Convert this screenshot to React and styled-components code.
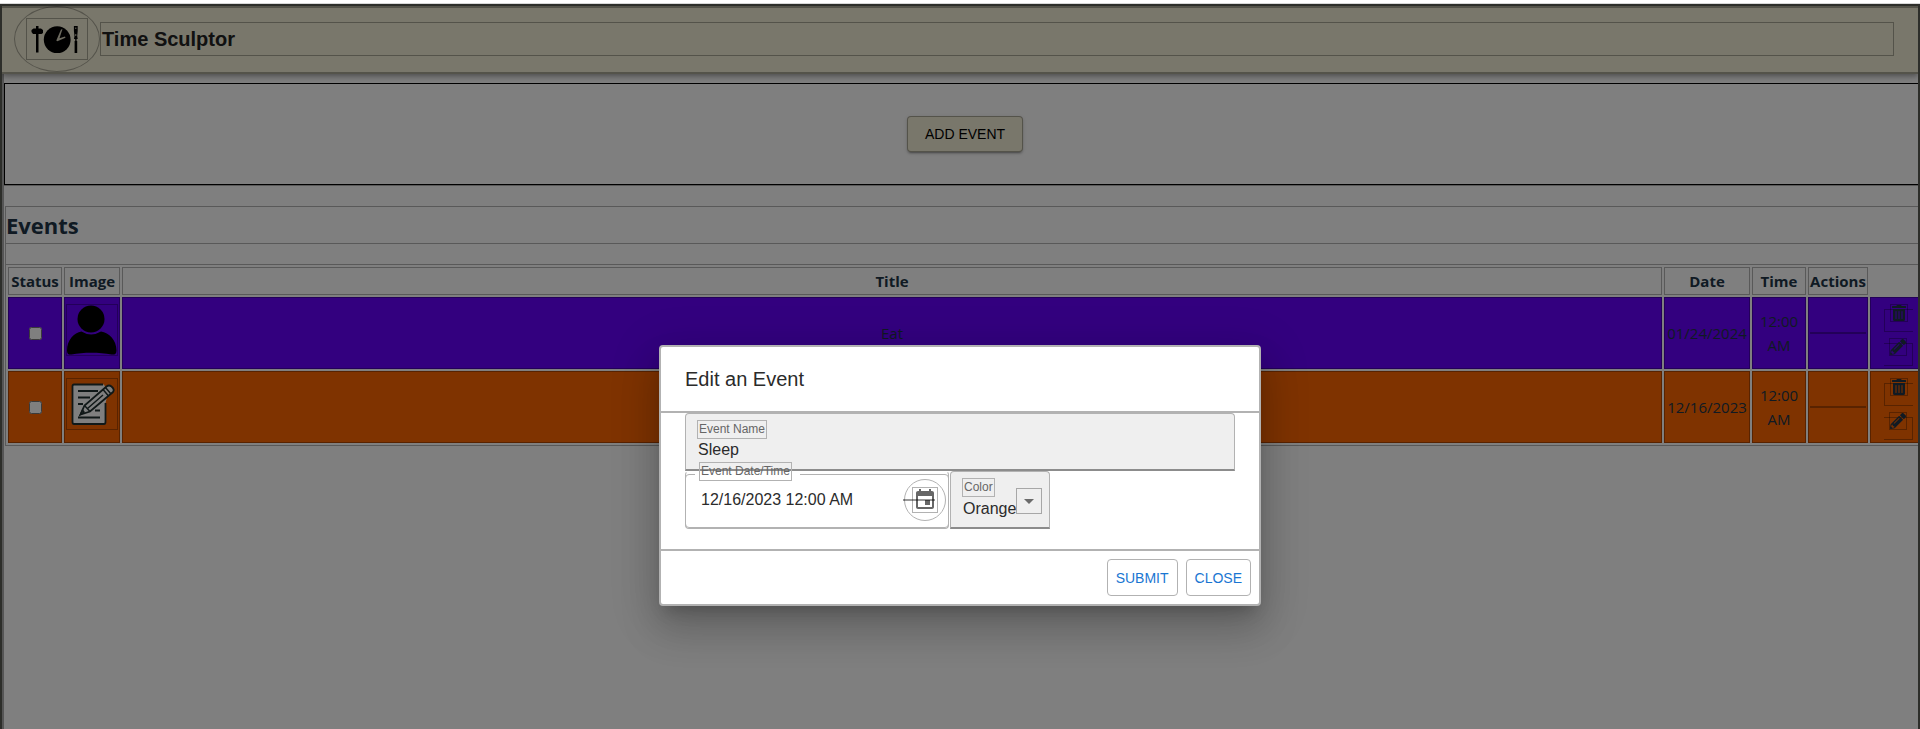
import React from 'react';
import styled, { createGlobalStyle } from 'styled-components';
import { FaPencilAlt, FaTrashAlt } from 'react-icons/fa';

const line = 'rgba(0, 0, 0, 0.3)';
const ui = "'Liberation Sans', Arial, sans-serif";
const body = "'Open Sans', 'Noto Sans', sans-serif";

const GlobalStyle = createGlobalStyle`
  *, *::before, *::after { box-sizing: border-box; }
  body { margin: 0; background: #fff; overflow: hidden; font-family: ${body}; color: #213547; }
  button, input, select { font: inherit; color: inherit; margin: 0; }
`;

const Page = styled.div`
  border-top: 1px solid #d8d8d8;
  margin-top: 3px;
  height: calc(100vh - 3px);
  position: relative;
`;

const Frame = styled.div`
  height: 100%;
  overflow: hidden;
  border: 2px solid #5a5c54;
  border-bottom: 0;
`;

const Header = styled.header`
  position: relative;
  display: flex;
  align-items: center;
  height: 68px;
  padding: 0 24px 2px 12px;
  background: #f2eed6;
  border: 2px solid ${line};
  border-width: 2px 0;
  box-shadow: 0 2px 4px -1px rgba(0, 0, 0, 0.2), 0 4px 5px rgba(0, 0, 0, 0.14), 0 1px 10px rgba(0, 0, 0, 0.12);
`;

const LogoButton = styled.button`
  flex: none;
  width: 86px;
  height: 66px;
  padding: 11px;
  background: none;
  border: 1px solid ${line};
  border-radius: 50%;
  color: #000;
  svg { display: block; width: 62px; height: 42px; border: 1px solid ${line}; }
`;

const AppTitle = styled.h1`
  flex: 1;
  margin: 0;
  padding-left: 1px;
  border: 1px solid ${line};
  font: 700 20px/32px ${ui};
  color: #222;
`;

const Main = styled.main`
  margin-right: -8px;
  padding-top: 9px;
  height: 100%;
  border-left: 2px solid #aaa;
`;

const Toolbar = styled.div`
  display: flex;
  align-items: center;
  justify-content: center;
  height: 102px;
  border: 1px solid #000;
  box-shadow: 0 1px 0 ${line};
`;

const AddButton = styled.button`
  height: 36px;
  padding: 0 17px;
  background: #f2eed6;
  border: 1px solid ${line};
  border-radius: 4px;
  box-shadow: 0 3px 1px -2px rgba(0, 0, 0, 0.2), 0 2px 2px rgba(0, 0, 0, 0.14), 0 1px 5px rgba(0, 0, 0, 0.12);
  font: 400 14px/24px ${ui};
  text-transform: uppercase;
  color: #000;
`;

const EventList = styled.section`
  margin: 21px -3px 0 1px;
  border-left: 1px solid ${line};
`;

const SectionTitle = styled.h2`
  margin: 0 0 20px;
  border: 1px solid ${line};
  border-left: 0;
  font-size: 22px;
  line-height: 36px;
  font-weight: 700;
`;

const Table = styled.table`
  width: 100%;
  table-layout: fixed;
  border: 1px solid ${line};
  border-left: 0;
  border-spacing: 2px;
  font-size: 15px;
  line-height: 24px;
  text-align: center;
`;

const Col = styled.col`
  width: ${(p) => p.$w};
`;

const Th = styled.th`
  height: 28px;
  padding: 0;
  border: 1px solid ${line};
  font-weight: 700;
`;

const Td = styled.td`
  height: 72px;
  padding: 0 1px;
  border: 1px solid ${line};
  background: ${(p) => p.$color};
`;

const Check = styled.input`
  display: block;
  width: 13px;
  height: 13px;
  margin: 0 auto;
`;

const Picture = styled.svg`
  display: block;
  width: 52px;
  height: 52px;
  margin: 0 auto 6px;
  border: 1px solid ${line};
`;

const Rule = styled.hr`
  margin: 0;
  border: 0;
  border-top: 2px solid ${line};
`;

const Actions = styled.div`
  display: flex;
  flex-direction: column;
  align-items: center;
  gap: 11px;
  padding-top: 9px;
`;

const IconButton = styled.button`
  display: flex;
  justify-content: center;
  width: 29px;
  height: 23px;
  padding: 0;
  background: none;
  border: 1px solid ${line};
  border-${(p) => p.$open}-width: 0;
  svg { flex: none; width: 18px; height: 18px; margin-top: -6px; border: 1px solid ${line}; }
`;

const Backdrop = styled.div`
  position: absolute;
  inset: 0;
  display: flex;
  align-items: flex-start;
  justify-content: center;
  padding-top: 341px;
  background: rgba(0, 0, 0, 0.5);
`;

const Dialog = styled.form`
  width: 602px;
  background: #fff;
  border: 2px solid #b2b2b2;
  border-radius: 4px;
  box-shadow: 0 11px 15px -7px rgba(0, 0, 0, 0.2), 0 24px 38px 3px rgba(0, 0, 0, 0.14), 0 9px 46px 8px rgba(0, 0, 0, 0.12);
  font-family: ${ui};
  color: #2b2b2b;
`;

const DialogTitle = styled.h2`
  margin: 0;
  padding: 16px 24px;
  font-size: 20px;
  line-height: 32px;
  font-weight: 400;
`;

const DialogContent = styled.div`
  padding: 0 24px 20px;
  border-top: 2px solid #b2b2b2;
  border-bottom: 2px solid #b2b2b2;
`;

const FieldRow = styled.div`
  display: flex;
  gap: 1px;
`;

const Filled = styled.div`
  position: relative;
  width: ${(p) => p.$w};
  height: 58px;
  padding: 6px 11px 0;
  background: #efefef;
  border: 1px solid #b2b2b2;
  border-bottom: 2px solid #8c8c8c;
  border-radius: 4px 4px 0 0;
`;

const Label = styled.label`
  display: block;
  width: max-content;
  padding: 0 1px;
  border: 1px solid #b2b2b2;
  font-size: 12px;
  line-height: 17px;
  color: #666;
`;

const Input = styled.input`
  display: block;
  width: 100%;
  height: 22px;
  padding: 0 0 0 1px;
  background: none;
  border: 0;
  outline: 0;
  font-size: 16px;
`;

const Select = styled.select`
  appearance: none;
  display: block;
  width: 100%;
  height: 22px;
  padding: 0 0 0 1px;
  background: none;
  border: 0;
  outline: 0;
  font-size: 16px;
`;

const Arrow = styled.svg`
  position: absolute;
  top: 16px;
  right: 7px;
  width: 26px;
  height: 26px;
  border: 1px solid #a7a7a7;
  fill: #6b6b6b;
  pointer-events: none;
`;

const Outlined = styled.div`
  position: relative;
  display: flex;
  align-items: center;
  width: 264px;
  height: 58px;
  padding: 0 2px 0 14px;
  border: 1px solid #b2b2b2;
  border-top-color: transparent;
  border-radius: 4px;
`;

const Notch = styled.fieldset`
  position: absolute;
  inset: -6px -1px 0 -1px;
  margin: 0;
  padding: 0 9px;
  border: 1px solid #b2b2b2;
  border-radius: 4px;
  pointer-events: none;
  legend { width: 105px; height: 16px; padding: 0; }
`;

const FloatingLabel = styled(Label)`
  position: absolute;
  top: -10px;
  left: 13px;
`;

const PickerButton = styled.button`
  position: relative;
  flex: none;
  width: 42px;
  height: 42px;
  padding: 7px;
  background: none;
  border: 1px solid #b2b2b2;
  border-radius: 50%;
  svg { display: block; width: 26px; height: 26px; border: 1px solid #b2b2b2; fill: #666; }
  &::after {
    content: '';
    position: absolute;
    top: 19px;
    left: -2px;
    width: 32px;
    height: 2px;
    background: rgba(0, 0, 0, 0.4);
  }
`;

const DialogActions = styled.div`
  display: flex;
  justify-content: flex-end;
  gap: 8px;
  padding: 8px;
`;

const TextButton = styled.button`
  height: 37px;
  padding: 0 8px;
  background: none;
  border: 1px solid #b2b2b2;
  border-radius: 4px;
  font-size: 14px;
  line-height: 24px;
  text-transform: uppercase;
  color: #1976d2;
`;

const Logo = () => (
  <svg viewBox="0 0 60 40" aria-hidden="true">
    <path d="M9 7H11.500V9.500H14L16 11V14L14.500 15H11.500V33.500H9V15H6L4.500 13V11L6.500 9.500H9z" />
    <circle cx="30.200" cy="20.700" r="13.400" />
    <path d="M30.300 22.300 29.300 21.500 34 10.500 35.500 10.300 34.500 13 32.500 19.300 38 17.500 38.500 18.800z" fill="#d8d4bf" />
    <path d="M46.900 7H50.700V12L50.200 17 50.700 20H49.600V22H50.200V34H47.600V22H48.200V20H47L47.500 17 46.900 12z" />
    <path d="M48.800 8.500V10M48.800 15V17" stroke="#d8d4bf" />
  </svg>
);

const Person = () => (
  <Picture viewBox="0 0 50 50" role="img" aria-label="Person">
    <circle cx="24" cy="14" r="13.500" />
    <path d="M0 45.500C0 35 7 27.500 14.500 26.500Q24 32.500 34 26.500C42 27.500 49.500 35 49.500 45.500 49.500 49 47.500 50 44.500 49.500 32 47 16.500 47 4.500 49.500 2 50 0 49 0 45.500z" />
  </Picture>
);

const Note = () => (
  <Picture viewBox="0 0 50 50" role="img" aria-label="Note">
    <path d="M37 5.500H7Q5.500 5.500 5.500 7V43Q5.500 45 7 45H37Q38.500 45 38.500 43V24L41 14z" fill="#fff" />
    <path d="M36 5.500H7Q5.500 5.500 5.500 7V43Q5.500 45 7 45H37Q38.500 45 38.500 43V24M11 12H31M11 18.500H23M11 25H16M28 31.500H33M11 38.500H33" fill="none" stroke="#213030" strokeWidth="1.800" />
    <path d="M13.500 35.500 17.500 26.500 39.500 7.500Q42 5.500 44.500 7.500 48 10.500 46 13L23 32.500z" fill="#fff" stroke="#213030" strokeWidth="1.800" />
    <path d="M17.500 26.500 23 32.500M20.500 29.500 36 16M36 10.500 41.500 17M38.500 8.500 44 15M13.500 35.500 17 33 15.500 31z" stroke="#213030" strokeWidth="1.500" fill="none" />
  </Picture>
);

const events = [
  { title: 'Eat', date: '01/24/2024', color: '#6600ff', art: <Person /> },
  { title: 'Sleep', date: '12/16/2023', color: '#ff6600', art: <Note /> },
];

export default function App() {
  return (
    <>
      <GlobalStyle />
      <Page>
        <Frame>
          <Header>
            <LogoButton type="button" aria-label="Home"><Logo /></LogoButton>
            <AppTitle>Time Sculptor</AppTitle>
          </Header>
          <Main>
            <Toolbar><AddButton type="button">Add Event</AddButton></Toolbar>
            <EventList>
              <SectionTitle>Events</SectionTitle>
              <Table>
                <colgroup>
                  <Col $w="54px" /><Col $w="56px" /><Col $w="auto" /><Col $w="86px" />
                  <Col $w="54px" /><Col $w="60px" /><Col $w="56px" />
                </colgroup>
                <thead>
                  <tr>
                    {['Status', 'Image', 'Title', 'Date', 'Time', 'Actions'].map((h) => <Th key={h} scope="col">{h}</Th>)}
                  </tr>
                </thead>
                <tbody>
                  {events.map((e) => (
                    <tr key={e.title}>
                      <Td $color={e.color}><Check type="checkbox" aria-label={`${e.title} done`} /></Td>
                      <Td $color={e.color}>{e.art}</Td>
                      <Td $color={e.color}>{e.title}</Td>
                      <Td $color={e.color}>{e.date}</Td>
                      <Td $color={e.color}>12:00 AM</Td>
                      <Td $color={e.color}><Rule /></Td>
                      <Td $color={e.color}>
                        <Actions>
                          <IconButton type="button" $open="right" aria-label={`Delete ${e.title}`}><FaTrashAlt /></IconButton>
                          <IconButton type="button" $open="left" aria-label={`Edit ${e.title}`}><FaPencilAlt /></IconButton>
                        </Actions>
                      </Td>
                    </tr>
                  ))}
                </tbody>
              </Table>
            </EventList>
          </Main>
        </Frame>
        <Backdrop>
          <Dialog role="dialog" aria-labelledby="dialog-title" onSubmit={(e) => e.preventDefault()}>
            <DialogTitle id="dialog-title">Edit an Event</DialogTitle>
            <DialogContent>
              <Filled $w="100%">
                <Label htmlFor="name">Event Name</Label>
                <Input id="name" defaultValue="Sleep" />
              </Filled>
              <FieldRow>
                <Outlined>
                  <Notch aria-hidden="true"><legend /></Notch>
                  <FloatingLabel htmlFor="when">Event Date/Time</FloatingLabel>
                  <Input id="when" defaultValue="12/16/2023 12:00 AM" />
                  <PickerButton type="button" aria-label="Choose date">
                    <svg viewBox="0 0 24 24"><path d="M17 12h-5v5h5v-5zM16 1v2H8V1H6v2H5c-1.110 0-1.990.9-1.990 2L3 19c0 1.100.890 2 2 2h14c1.100 0 2-.9 2-2V5c0-1.100-.9-2-2-2h-1V1h-2zm3 18H5V8h14v11z" /></svg>
                  </PickerButton>
                </Outlined>
                <Filled $w="100px">
                  <Label htmlFor="color">Color</Label>
                  <Select id="color" defaultValue="Orange">
                    <option>Orange</option>
                    <option>Purple</option>
                  </Select>
                  <Arrow viewBox="0 0 24 24"><path d="M7 10l5 5 5-5z" /></Arrow>
                </Filled>
              </FieldRow>
            </DialogContent>
            <DialogActions>
              <TextButton type="submit">Submit</TextButton>
              <TextButton type="button">Close</TextButton>
            </DialogActions>
          </Dialog>
        </Backdrop>
      </Page>
    </>
  );
}
